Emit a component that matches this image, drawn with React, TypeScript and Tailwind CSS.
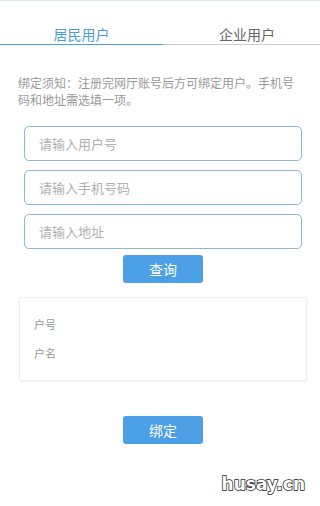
import React, { useState } from 'react';

const font = { fontFamily: '"Noto Sans CJK SC", "Noto Sans", sans-serif' };

export default function App() {
  const [tab, setTab] = useState(0);

  return (
    <div className="relative h-[506px] w-[320px] overflow-hidden bg-white border-t border-[#dde7ef]" style={font}>
      <div className="flex pt-[22px]">
        <button
          onClick={() => setTab(0)}
          className={`w-[163px] h-[22px] text-center text-[14px] leading-[22px] border-b ${tab === 0 ? 'text-[#4a9fd8] border-[#4a9fd8]' : 'text-[#666] border-[#ccc]'}`}
        >
          居民用户
        </button>
        <button
          onClick={() => setTab(1)}
          className={`flex-1 h-[22px] pl-[56px] text-left text-[14px] leading-[22px] border-b ${tab === 1 ? 'text-[#4a9fd8] border-[#4a9fd8]' : 'text-[#666] border-[#ccc]'}`}
        >
          企业用户
        </button>
      </div>

      <p className="mt-[29px] px-[18px] text-[12px] leading-[17px] text-[#999]">
        绑定须知：注册完网厅账号后方可绑定用户。手机号码和地址需选填一项。
      </p>

      <div className="mt-[18px] flex flex-col gap-[9px] px-[24px] w-[326px]">
        {['请输入用户号', '请输入手机号码', '请输入地址'].map((p) => (
          <input
            key={p}
            placeholder={p}
            className="h-[35px] w-[278px] rounded-[5px] border border-[#8ab8d8] px-[14px] text-[13px] text-[#333] placeholder:text-[#b0b0b0] outline-none"
          />
        ))}
      </div>

      <div className="mt-[6px] flex justify-center pl-[6px]">
        <button className="h-[28px] w-[80px] rounded-[3px] bg-[#4ba0e6] text-[14px] text-white">查询</button>
      </div>

      <div className="mx-[19px] mt-[14px] h-[84px] w-[288px] rounded-[2px] border border-[#eee] px-[14px] pt-[18px] text-[11px] text-[#999] shadow-[0_1px_2px_rgba(0,0,0,0.05)]">
        <div className="leading-[16px]">户号</div>
        <div className="mt-[13px] leading-[16px]">户名</div>
      </div>

      <div className="mt-[35px] flex justify-center pl-[6px]">
        <button className="h-[28px] w-[80px] rounded-[3px] bg-[#4ba0e6] text-[14px] text-white">绑定</button>
      </div>

      <div
        className="absolute right-[15px] bottom-[9px] text-[17px] font-bold text-white [-webkit-text-stroke:1.5px_#222] [paint-order:stroke_fill]"
        style={{ fontFamily: '"DejaVu Sans", sans-serif' }}
      >
        husay.cn
      </div>
    </div>
  );
}
